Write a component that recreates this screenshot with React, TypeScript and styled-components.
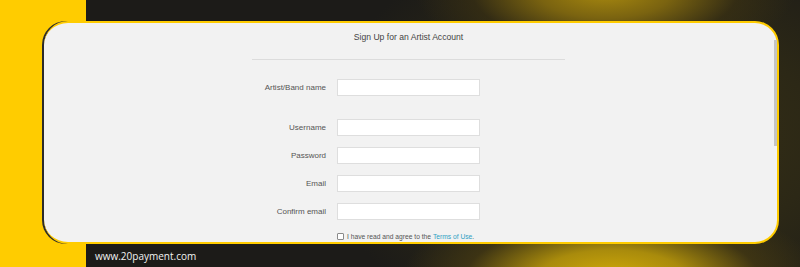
import styled, { createGlobalStyle } from "styled-components";

const GlobalStyle = createGlobalStyle`
  html, body {
    margin: 0;
    padding: 0;
    width: 800px;
    height: 267px;
    overflow: hidden;
  }
`;

const fields = [
  { label: "Artist/Band name", type: "text", spaced: true },
  { label: "Username", type: "text" },
  { label: "Password", type: "password" },
  { label: "Email", type: "email" },
  { label: "Confirm email", type: "email" },
];

const App = () => {
  return (
    <Banner>
      <GlobalStyle />
      <Card>
        <Title>Sign Up for an Artist Account</Title>
        <Divider />
        <Form>
          {fields.map(({ label, type, spaced }) => (
            <Row key={label} $spaced={spaced}>
              <Label>{label}</Label>
              <Input type={type} />
            </Row>
          ))}
          <Row>
            <span />
            <Agree>
              <Check type="checkbox" />
              I have read and agree to the <TermsLink href="#">Terms of Use</TermsLink>.
            </Agree>
          </Row>
        </Form>
        <ScrollThumb />
      </Card>
      <Footer>www.20payment.com</Footer>
    </Banner>
  );
};

const Banner = styled.div`
  width: 800px;
  height: 267px;
  box-sizing: border-box;
  padding: 21px 21px 0 42px;
  display: flex;
  flex-direction: column;
  background:
    linear-gradient(to right, #ffcc00 86px, transparent 86px),
    radial-gradient(ellipse 190px 75px at 605px -8px, #a8890f 0%, #7a6310 35%, rgba(60, 50, 18, 0.6) 70%, rgba(28, 27, 24, 0) 100%),
    radial-gradient(ellipse 210px 80px at 612px 278px, #d2ac08 0%, #a98b0c 35%, rgba(70, 58, 18, 0.7) 70%, rgba(28, 27, 24, 0) 100%),
    radial-gradient(ellipse 320px 220px at 640px 140px, #3a3215 0%, #2c2816 55%, #1c1b18 100%);
`;

const Card = styled.div`
  position: relative;
  height: 223px;
  box-sizing: border-box;
  padding-right: 4px;
  background: #f2f2f2;
  border: 2px solid #ffcc00;
  border-left: 0;
  border-radius: 24px;
  box-shadow: -2px 0 0 #2b2b2b;
  margin-left: 2px;
  font-family: "Liberation Sans", Arial, sans-serif;
  display: flex;
  flex-direction: column;
  align-items: center;
`;

const Title = styled.div`
  margin-top: 9px;
  font-size: 8.6px;
  color: #444;
`;

const Divider = styled.div`
  width: 313px;
  height: 1px;
  background: #dcdcdc;
  margin-top: 17px;
`;

const Form = styled.div`
  width: 313px;
  margin-top: 19px;
  display: flex;
  flex-direction: column;
  gap: 11px;
`;

const Row = styled.div<{ $spaced?: boolean }>`
  display: grid;
  grid-template-columns: 74px 143px;
  column-gap: 11px;
  align-items: center;
  margin-bottom: ${(p) => (p.$spaced ? "12px" : "0")};
`;

const Label = styled.label`
  text-align: right;
  font-size: 8px;
  color: #555;
`;

const Input = styled.input`
  box-sizing: border-box;
  width: 143px;
  height: 17px;
  margin: 0;
  background: #fff;
  border: 1px solid #dedede;
  outline: none;
`;

const Agree = styled.label`
  display: flex;
  align-items: center;
  white-space: pre;
  font-size: 6.7px;
  color: #555;
  margin-top: 2px;
`;

const Check = styled.input`
  appearance: none;
  box-sizing: border-box;
  width: 7px;
  height: 7px;
  margin: 0 3px 0 0;
  background: #fff;
  border: 1px solid #8a8a8a;
  border-radius: 1px;
`;

const TermsLink = styled.a`
  color: #2f9fc4;
  text-decoration: none;
`;

const ScrollThumb = styled.div`
  position: absolute;
  right: 0;
  top: 17px;
  width: 3px;
  height: 106px;
  background: #c4c4c4;
`;

const Footer = styled.div`
  margin-left: 44px;
  flex: 1;
  display: flex;
  align-items: center;
  padding-left: 9px;
  font-family: "Open Sans", sans-serif;
  font-size: 10px;
  color: #f2f2f2;
`;

export default App;
